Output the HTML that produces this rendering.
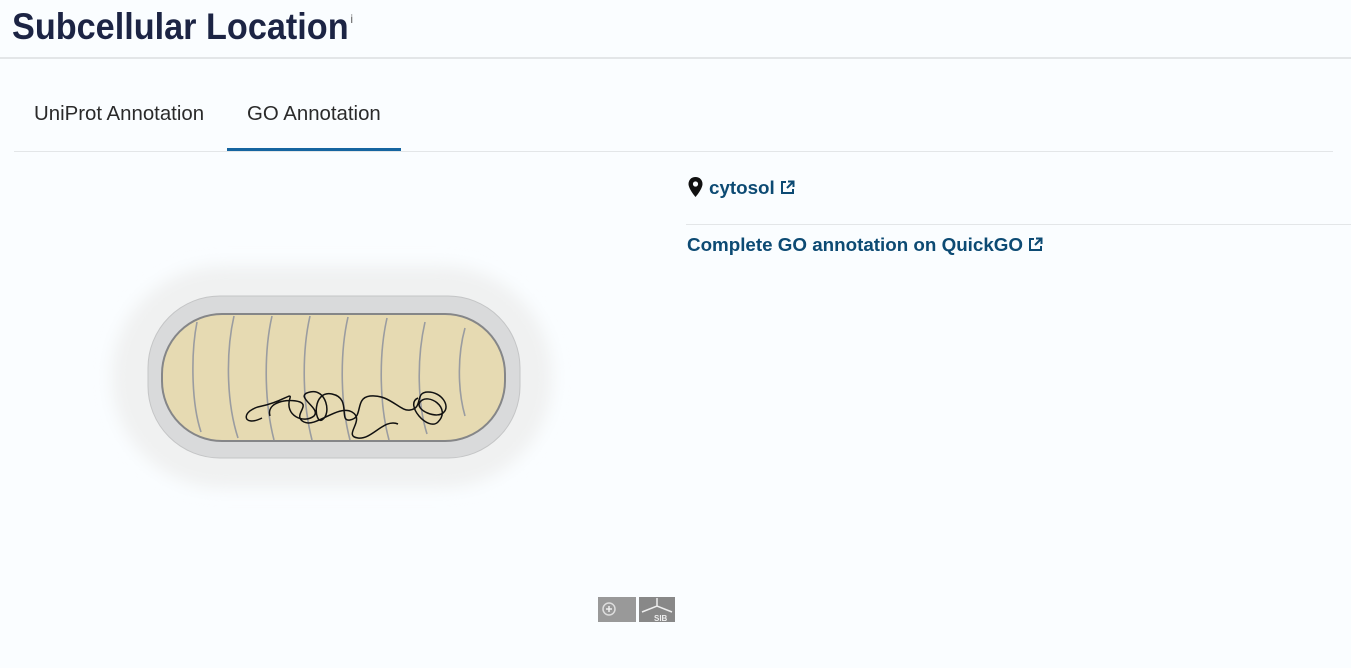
<!DOCTYPE html>
<html><head><meta charset="utf-8"><style>
body{margin:0;background:#fafdff;width:1351px;height:668px;overflow:hidden;position:relative;font-family:"Liberation Sans",sans-serif}
.title{position:absolute;left:12px;top:6px;font-size:37px;font-weight:bold;color:#1c2444;transform:scaleX(0.925);transform-origin:left top;white-space:nowrap}
.title sup{font-size:12px;font-weight:normal;color:#555;vertical-align:top;position:relative;top:6px;margin-left:2px}
.hr1{position:absolute;left:0;top:57px;width:1351px;height:2px;background:#e3e6e8}
.tab{position:absolute;top:103px;font-size:20.4px;color:#2a2a2a}
.tabline{position:absolute;left:14px;top:151px;width:1319px;height:1px;background:#e3e6e8}
.active{position:absolute;left:227px;top:148px;width:174px;height:3px;background:#1565a0}
a{color:#0c4a73;font-weight:bold;font-size:18.8px;text-decoration:none;position:absolute}
.hr2{position:absolute;left:686px;top:224px;width:665px;height:1px;background:#e3e6e8}
</style></head><body>
<div class="title">Subcellular Location<sup>i</sup></div>
<div class="hr1"></div>
<div class="tab" style="left:34px">UniProt Annotation</div>
<div class="tab" style="left:247px">GO Annotation</div>
<div class="tabline"></div><div class="active"></div>
<svg style="position:absolute;left:688px;top:177px" width="15" height="20" viewBox="0 0 15 20"><path d="M7.5 0C3.4 0 0.5 3 0.5 7c0 5 7 13 7 13s7-8 7-13C14.5 3 11.6 0 7.5 0z" fill="#111"/><circle cx="7.5" cy="7" r="2.6" fill="#fafdff"/></svg>
<a style="left:709px;top:177px">cytosol <svg width="15" height="15" viewBox="0 0 15 15" style="vertical-align:-1px"><path d="M6 2H2v11h11V9" fill="none" stroke="#0c4a73" stroke-width="2"/><path d="M8 1.5h5.5V7M13.5 1.5L7 8" fill="none" stroke="#0c4a73" stroke-width="2"/></svg></a>
<div class="hr2"></div>
<a style="left:687px;top:234px">Complete GO annotation on QuickGO <svg width="15" height="15" viewBox="0 0 15 15" style="vertical-align:-1px"><path d="M6 2H2v11h11V9" fill="none" stroke="#0c4a73" stroke-width="2"/><path d="M8 1.5h5.5V7M13.5 1.5L7 8" fill="none" stroke="#0c4a73" stroke-width="2"/></svg></a>
<svg style="position:absolute;left:0;top:0" width="700" height="668">
<defs><filter id="b"><feGaussianBlur stdDeviation="8"/></filter></defs>
<rect x="112" y="266" width="440" height="222" rx="110" fill="#f0f1f1" filter="url(#b)"/>
<rect x="148" y="296" width="372" height="162" rx="72" fill="#d9dadb" stroke="#c4c5c6" stroke-width="1"/>
<rect x="162" y="314" width="343" height="127" rx="60" fill="#e6dab2" stroke="#858688" stroke-width="2"/>
<g fill="none" stroke="#9a9ca0" stroke-width="1.6">
<path d="M197 322c-6 30-6 80 4 110"/><path d="M234 316c-8 35-8 85 4 122"/><path d="M272 316c-8 35-8 85 2 124"/><path d="M310 316c-8 35-8 85 2 124"/><path d="M348 317c-8 35-8 85 2 123"/><path d="M387 318c-8 35-8 85 2 122"/><path d="M425 322c-8 35-8 80 2 112"/><path d="M465 328c-7 25-8 60 0 88"/>
</g>
<path d="M262 418c-20 10-22-8 0-12c20-4 30-14 28-8c-6 18 14 26 24 18c8-8-22-20-4-24c16-4 22 22 12 28c-8 4-10-30 10-26c20 4 6 28 18 26c14-2 4-22 20-24c20-2 30 16 40 14c14-2 4-18 18-18c14 0 22 14 16 20c-6 8-30-2-24-10c8-10 32 6 18 20c-10 10-34-18-20-24M270 416c-4-14 18-18 30-14c10 4-8 14 4 20c12 6 34-18 48-10c14 8-10 24 6 26c14 2 26-20 40-14" fill="none" stroke="#111" stroke-width="1.5"/>
<rect x="598" y="597" width="38" height="25" fill="#999"/><rect x="639" y="597" width="36" height="25" fill="#888"/>
<circle cx="609" cy="609" r="6" fill="none" stroke="#ddd" stroke-width="1.5"/><path d="M609 606v6M606 609h6" stroke="#eee" stroke-width="1.5"/>
<path d="M642 612l15-6 15 6M657 598v8" stroke="#eee" stroke-width="1.5" fill="none"/>
<text x="654" y="621" font-size="8" font-weight="bold" fill="#eee" font-family="Liberation Sans">SIB</text>
</svg>
</body></html>
